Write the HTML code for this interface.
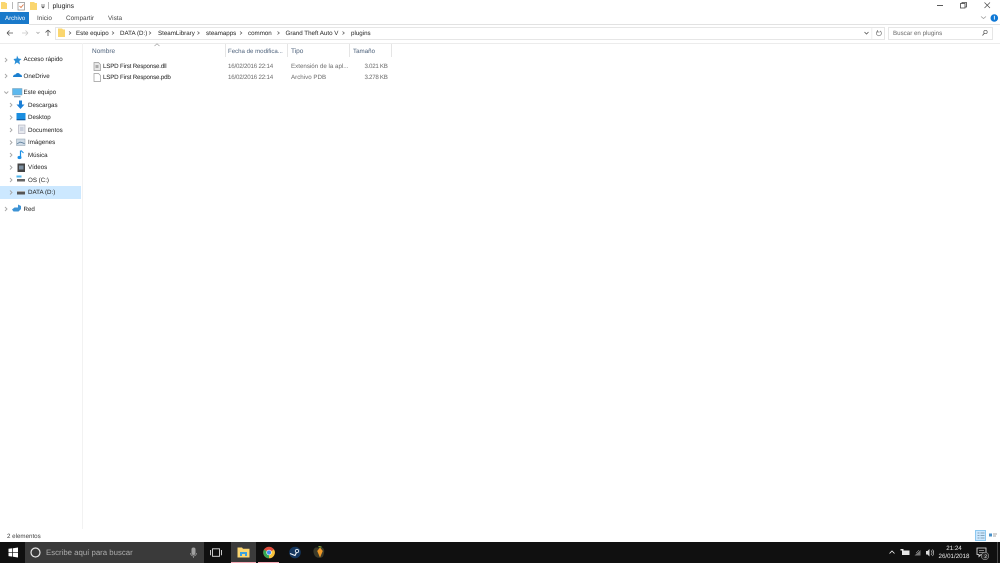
<!DOCTYPE html>
<html lang="es"><head><meta charset="utf-8"><title>plugins</title>
<style>
html,body{margin:0;padding:0;background:#fff}
body{width:1000px;height:563px;overflow:hidden}
#w{position:relative;width:1000px;height:563px;overflow:hidden;font-family:"Liberation Sans",sans-serif;font-size:6.2px;color:#1e1e1e;filter:blur(.3px);background:#fff;text-rendering:geometricPrecision}
.t{position:absolute;white-space:nowrap;line-height:10px;height:10px;margin-top:1px}
.n{margin-top:0}
.b{position:absolute}
svg{position:absolute;overflow:visible}
.g{color:#6d6d6d}
.d{letter-spacing:-.2px}
.s{letter-spacing:-.3px}
.f{letter-spacing:-.17px}
.h{color:#4c607a;font-size:6.500px}
.chev{fill:none;stroke:#a6a6a6;stroke-width:.9}
.bc{fill:none;stroke:#555;stroke-width:.7}
</style></head><body><div id="w">

<!-- title bar -->
<svg style="left:0;top:0" width="150" height="12">
<path d="M1 2h4l1 1h1v6H1z" fill="#fad66f"/>
<rect x="12" y="2" width=".7" height="7" fill="#999"/>
<rect x="18" y="2.500" width="6.500" height="7.500" fill="#fff" stroke="#888" stroke-width=".7"/>
<path d="M19.500 6l1.500 1.500 2.500-3" fill="none" stroke="#d9703a" stroke-width=".8"/>
<path d="M30 2h4l1 1h2v7h-7z" fill="#fad66f"/>
<path d="M41 5h4" stroke="#555" stroke-width=".7"/><path d="M41 6.500h4l-2 2z" fill="#444"/>
<rect x="48" y="2" width=".7" height="7" fill="#999"/>
</svg>
<div class="t" style="left:52.500px;top:1px;font-size:6.800px">plugins</div>

<!-- window controls -->
<svg style="left:900px;top:0" width="100" height="25">
<path d="M37 5.500h6" stroke="#333" stroke-width=".8"/>
<rect x="60.500" y="3.500" width="4.500" height="4.500" fill="#fff" stroke="#444" stroke-width=".8"/>
<path d="M62 3.500v-1h4.500v4.500h-1.500" fill="none" stroke="#444" stroke-width=".8"/>
<path d="M84.500 2.500l5.500 5.500M90 2.500l-5.500 5.500" stroke="#444" stroke-width=".7"/>
<path d="M81 16.500l2.500 2 2.500-2" fill="none" stroke="#999" stroke-width=".8"/>
<circle cx="94.300" cy="18" r="3.800" fill="#0f78d6"/>
<rect x="93.900" y="15.800" width=".9" height="3.800" fill="#fff"/>
</svg>

<!-- ribbon tabs -->
<div class="b" style="left:0;top:12px;width:29px;height:12px;background:#1979ca"></div>
<div class="t" style="left:5px;top:12.500px;color:#fff;font-size:6.100px">Archivo</div>
<div class="t" style="left:37px;top:12.500px;color:#444;font-size:6.400px">Inicio</div>
<div class="t" style="left:66px;top:12.500px;color:#444;font-size:6.400px">Compartir</div>
<div class="t" style="left:108px;top:12.500px;color:#444;font-size:6.400px">Vista</div>
<div class="b" style="left:29px;top:24px;width:971px;height:1px;background:#e2e2e2"></div>

<!-- nav bar -->
<svg style="left:0;top:26px" width="60" height="16">
<path d="M7 7h6M7 7l2.500-2.500M7 7l2.500 2.500" fill="none" stroke="#555" stroke-width=".8"/>
<path d="M28 7h-6M28 7l-2.500-2.500M28 7l-2.500 2.500" fill="none" stroke="#c8c8c8" stroke-width=".8"/>
<path d="M36.500 6l1.500 1.500 1.500-1.500" fill="none" stroke="#999" stroke-width=".7"/>
<path d="M48 10V4M48 4l-2.500 2.500M48 4l2.500 2.500" fill="none" stroke="#555" stroke-width=".8"/>
</svg>
<div class="b" style="left:55px;top:27px;width:828px;height:11px;border:1px solid #e6e6e6;box-sizing:content-box"></div>
<svg style="left:56px;top:27px" width="330" height="12">
<path d="M2 1.500h4l1 1h2v7.500H2z" fill="#fad66f"/>
<path class="bc" d="M13 4.500l1.800 1.500-1.800 1.500"/>
<path class="bc" d="M56 4.500l1.800 1.500-1.800 1.500"/>
<path class="bc" d="M93 4.500l1.800 1.500-1.800 1.500"/>
<path class="bc" d="M141.500 4.500l1.800 1.500-1.800 1.500"/>
<path class="bc" d="M184 4.500l1.800 1.500-1.800 1.500"/>
<path class="bc" d="M221.500 4.500l1.800 1.500-1.800 1.500"/>
<path class="bc" d="M286.500 4.500l1.800 1.500-1.800 1.500"/>
</svg>
<div class="t" style="left:76px;top:28px">Este equipo</div>
<div class="t" style="left:120px;top:28px">DATA (D:)</div>
<div class="t" style="left:158px;top:28px">SteamLibrary</div>
<div class="t" style="left:206px;top:28px">steamapps</div>
<div class="t" style="left:248px;top:28px">common</div>
<div class="t" style="left:285.500px;top:28px">Grand Theft Auto V</div>
<div class="t" style="left:351px;top:28px">plugins</div>
<svg style="left:860px;top:27px" width="30" height="13">
<path d="M4.500 5l2 2 2-2" fill="none" stroke="#555" stroke-width=".8"/>
<rect x="11.500" y="0" width=".7" height="13" fill="#e6e6e6"/>
<path d="M20 4a2.500 2.500 0 1 1-2.200 0M17.500 3v2h2" fill="none" stroke="#777" stroke-width=".7"/>
</svg>
<div class="b" style="left:888px;top:27px;width:103px;height:11px;border:1px solid #e6e6e6"></div>
<div class="t g" style="left:893px;top:28px">Buscar en plugins</div>
<svg style="left:980px;top:28px" width="10" height="10">
<circle cx="5.500" cy="4" r="1.700" fill="none" stroke="#555" stroke-width=".7"/>
<path d="M4.300 5.300L2.500 7.500" stroke="#555" stroke-width=".8"/>
</svg>
<div class="b" style="left:0;top:42.500px;width:1000px;height:1.500px;background:#ececec"></div>

<!-- column headers -->
<svg style="left:154px;top:43px" width="6" height="4"><path d="M.5 3L3 .8 5.500 3" fill="none" stroke="#999" stroke-width=".6"/></svg>
<div class="b" style="left:225px;top:44px;width:1px;height:13px;background:#e5e5e5"></div>
<div class="b" style="left:287px;top:44px;width:1px;height:13px;background:#e5e5e5"></div>
<div class="b" style="left:349px;top:44px;width:1px;height:13px;background:#e5e5e5"></div>
<div class="b" style="left:391px;top:44px;width:1px;height:13px;background:#e5e5e5"></div>
<div class="t h" style="left:92px;top:46px">Nombre</div>
<div class="t h" style="left:228px;top:46px;font-size:6.100px">Fecha de modifica...</div>
<div class="t h" style="left:291px;top:46px">Tipo</div>
<div class="t h" style="left:353px;top:46px;font-size:6.200px">Tamaño</div>

<!-- files -->
<svg style="left:93px;top:62px" width="9" height="21">
<path d="M1 .5h4.500L7.500 2.500V8.500H1z" fill="#e8e8e8" stroke="#999" stroke-width=".7"/>
<rect x="2.500" y="3" width="3" height="3" fill="#aaa"/>
<path d="M1 11.500h4.500L7.500 13.500V19.500H1z" fill="#fff" stroke="#999" stroke-width=".7"/>
</svg>
<div class="t f" style="left:103px;top:61px">LSPD First Response.dll</div>
<div class="t g d" style="left:228px;top:61px">16/02/2016 22:14</div>
<div class="t g" style="left:291px;top:61px">Extensión de la apl...</div>
<div class="t g s" style="left:364.500px;top:61px">3.021 KB</div>
<div class="t f" style="left:103px;top:72px">LSPD First Response.pdb</div>
<div class="t g d" style="left:228px;top:72px">16/02/2016 22:14</div>
<div class="t g" style="left:291px;top:72px">Archivo PDB</div>
<div class="t g s" style="left:364.500px;top:72px">3.278 KB</div>

<!-- sidebar -->
<div class="b" style="left:82px;top:43px;width:1px;height:486px;background:#f2f2f2"></div>
<div class="b" style="left:0;top:186px;width:81px;height:12.500px;background:#cce8ff"></div>
<svg style="left:0;top:51.500px" width="30" height="166">
<g class="chev">
<path d="M5 6l2 2-2 2"/><path d="M5 22l2 2-2 2"/><path d="M4.300 39.500l2 2 2-2"/>
<path d="M10 51l2 2-2 2"/><path d="M10 63.500l2 2-2 2"/><path d="M10 76l2 2-2 2"/>
<path d="M10 88.500l2 2-2 2"/><path d="M10 101l2 2-2 2"/><path d="M10 113.500l2 2-2 2"/>
<path d="M10 126l2 2-2 2"/><path d="M10 138.500l2 2-2 2"/><path d="M5 155l2 2-2 2"/>
</g>
<path d="M17 3.500l1.500 3 3 .5-2.200 2 .7 3.500-3-2-2.500 2 .7-3-1.700-2.500 3-.5z" fill="#2a8fd8"/>
<path d="M13 25c0-2 1.500-2.500 2.500-2.500.8-2 4-2 4.500 0 1.500 0 2 1 2 2.500z" fill="#1a7fd0"/>
<rect x="12.500" y="36.500" width="9.500" height="6.500" fill="#5cb8ee" stroke="#7b9bb0" stroke-width=".5"/><rect x="14" y="44" width="6.500" height="1.300" fill="#9ab"/>
<path d="M19 48.500h3v4h2.500l-4 4.500-4-4.500H19z" fill="#1b7fd6"/>
<rect x="16.500" y="61" width="9" height="7" fill="#1a8ee0"/><rect x="16.500" y="67" width="9" height="1.300" fill="#0f5fa8"/>
<rect x="18.500" y="73" width="6.500" height="8.500" fill="#e6e9ee" stroke="#99a" stroke-width=".5"/><path d="M20 76h3.500M20 78h3.500" stroke="#78a" stroke-width=".6"/>
<rect x="16.500" y="87" width="8.500" height="6.500" fill="#cfdbe6" stroke="#8899a8" stroke-width=".5"/><path d="M17 92l3-2 4.500 1.500" stroke="#4b6f8f" fill="none" stroke-width=".7"/>
<path d="M20.500 98.500v7" stroke="#1b8fe6" stroke-width="1.200"/><ellipse cx="19.500" cy="105.500" rx="2" ry="1.600" fill="#1b8fe6"/><path d="M21 98.500l2.500 2.500" stroke="#1b8fe6" stroke-width="1"/>
<rect x="17.500" y="111.500" width="7.500" height="8.500" fill="#444"/><rect x="19" y="113.500" width="4.500" height="4" fill="#7d8fa0"/>
<rect x="16.500" y="123.500" width="5" height="2" fill="#4db5ee"/><rect x="17" y="127" width="8" height="2.500" fill="#666"/>
<rect x="17" y="140" width="8" height="2.500" fill="#555"/><rect x="17" y="139" width="8" height="1" fill="#aaa"/>
<path d="M12 157.500l2.500-2h3.500v-3l3 1.500v3l-2.500 2.500h-5z" fill="#3d93d5"/>
</svg>
<div class="t" style="left:23.500px;top:54px">Acceso rápido</div>
<div class="t" style="left:23.500px;top:70.500px">OneDrive</div>
<div class="t" style="left:23.500px;top:87px">Este equipo</div>
<div class="t" style="left:28px;top:99.500px">Descargas</div>
<div class="t" style="left:28px;top:112px">Desktop</div>
<div class="t" style="left:28px;top:124.500px">Documentos</div>
<div class="t" style="left:28px;top:137px">Imágenes</div>
<div class="t" style="left:28px;top:149.500px">Música</div>
<div class="t" style="left:28px;top:162px">Vídeos</div>
<div class="t" style="left:28px;top:174.500px">OS (C:)</div>
<div class="t" style="left:28px;top:186.500px">DATA (D:)</div>
<div class="t" style="left:23.500px;top:204px">Red</div>

<!-- status bar -->
<div class="t n" style="left:7px;top:531.500px;color:#444">2 elementos</div>
<div class="b" style="left:975px;top:530px;width:11px;height:11px;background:#cce8ff;border:1px solid #8cc8f0;box-sizing:border-box"></div>
<svg style="left:975px;top:530px" width="25" height="12">
<path d="M2.500 3h2M2.500 5.500h2M2.500 8h2M5.500 3h4M5.500 5.500h4M5.500 8h4" stroke="#6f8ca3" stroke-width=".8"/>
<rect x="14" y="3.500" width="3" height="3" fill="#4a90c8"/><path d="M18 4h4M18 6h3" stroke="#888" stroke-width=".7"/>
</svg>

<!-- taskbar -->
<div class="b" style="left:0;top:542px;width:1000px;height:21px;background:#101010"></div>
<svg style="left:0;top:542px" width="30" height="21">
<path d="M8.500 6.800l3.800-.5v3.800H8.500zM13 6.200l5-.7v4.600h-5zM8.500 10.800h3.800v3.800l-3.800-.5zM13 10.800h5v4.700l-5-.7z" fill="#fff"/>
</svg>
<div class="b" style="left:25px;top:542px;width:179px;height:21px;background:#3a3a3a"></div>
<svg style="left:25px;top:542px" width="180" height="21">
<circle cx="10.500" cy="10.500" r="4.500" fill="none" stroke="#e8e8e8" stroke-width="1.200"/>
<rect x="166.500" y="5.500" width="4" height="7.500" rx="2" fill="#a0a0a0"/>
<path d="M165.500 11a3 3 0 0 0 6 0M168.500 14v2" fill="none" stroke="#a0a0a0" stroke-width=".7"/>
</svg>
<div class="t n" style="left:46px;top:547.500px;color:#adadad;font-size:7.800px">Escribe aquí para buscar</div>
<svg style="left:205px;top:542px" width="135" height="21">
<rect x="7.500" y="6.800" width="7" height="7.500" fill="none" stroke="#ddd" stroke-width=".9"/>
<path d="M5.500 8v5.300M16.500 8v5.300" stroke="#ddd" stroke-width=".9"/>
</svg>
<div class="b" style="left:231px;top:542px;width:25px;height:21px;background:#3b3b3b"></div>
<div class="b" style="left:231px;top:561.500px;width:25px;height:1.500px;background:#f4a8b4"></div>
<div class="b" style="left:258px;top:561.500px;width:21px;height:1.500px;background:#f4a8b4"></div>
<svg style="left:231px;top:542px" width="115" height="21">
<path d="M6.500 5.500h4.500l1 1.200h6.500V15.500H6.500z" fill="#fbd671"/>
<rect x="9" y="10" width="7" height="4" fill="#3aa0e0"/><rect x="11" y="12" width="3" height="2" fill="#fbd671"/>
<circle cx="38" cy="10.500" r="5.800" fill="#e14c3d"/>
<path d="M38 10.500L43 7.500A5.800 5.800 0 0 1 38 16.300z" fill="#f6c33c"/>
<path d="M38 10.500L38 16.300A5.800 5.800 0 0 1 33 7.600z" fill="#36a853"/>
<circle cx="38" cy="10.500" r="2.700" fill="#fff"/><circle cx="38" cy="10.500" r="2.100" fill="#4388ef"/>
<circle cx="64" cy="10.500" r="5.800" fill="#14365e"/>
<circle cx="66" cy="9" r="1.700" fill="none" stroke="#e8eef5" stroke-width=".9"/>
<path d="M59 11.500l5 2 1.500-3" fill="none" stroke="#e8eef5" stroke-width="1.200"/>
<path d="M85 5.500c-1.800 1-2.500 2.800-1.800 5.500.6 2.800 2.300 4.800 5.800 4.800s4-2 4.500-4.800c.6-2.700 0-4.500-1.800-5.500z" fill="#3b3a2a" transform="translate(-.5 0)"/>
<path d="M89 5.500l-2.800 3.500 2.800 6.500 2.800-6.500z" fill="#f09a28"/>
<path d="M87.500 4.500l3 .5" stroke="#8ab84a" stroke-width="1"/>
</svg>

<!-- tray -->
<svg style="left:885px;top:542px" width="115" height="21">
<path d="M4.500 11.500l2.500-2.500 2.500 2.500" fill="none" stroke="#eee" stroke-width=".8"/>
<rect x="17" y="8.500" width="7.500" height="4.500" fill="#e6e6e6"/><rect x="15.500" y="7" width="3" height="1.500" fill="#e6e6e6"/>
<path d="M29.500 13.500l6-5.500v5.500z" fill="#777"/><path d="M31 11l3-3" stroke="#ccc" stroke-width=".5"/>
<path d="M41 9h1.500l2-2v7.500l-2-2H41z" fill="#ddd"/><path d="M46 8.500a3 3 0 0 1 0 4.500M47.500 7.500a5 5 0 0 1 0 6.500" fill="none" stroke="#ddd" stroke-width=".6"/>
<path d="M92 6h9v6.500h-5l-2 2v-2h-2z" fill="none" stroke="#eee" stroke-width=".8"/>
<path d="M94 8.500h5M94 10.500h5" stroke="#eee" stroke-width=".6"/>
<circle cx="100" cy="14" r="3.800" fill="#2a2a2a" stroke="#bbb" stroke-width=".5"/>
<rect x="112" y="0" width=".8" height="21" fill="#555"/>
</svg>
<div class="t n" style="left:937px;top:543.500px;width:34px;text-align:center;color:#e8e8e8;font-size:6.200px">21:24</div>
<div class="t n" style="left:937px;top:552px;width:34px;text-align:center;color:#e8e8e8;font-size:6.200px">26/01/2018</div>
<div class="t n" style="left:983.700px;top:551.500px;width:4px;color:#eee;font-size:5px;text-align:center">2</div>

</div></body></html>
